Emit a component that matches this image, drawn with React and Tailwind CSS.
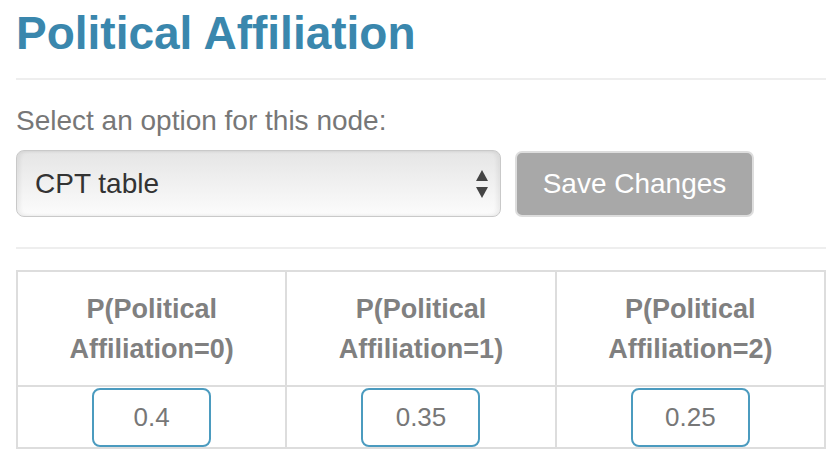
export default function App() {
  const cols = ["0", "1", "2"];
  const vals = ["0.4", "0.35", "0.25"];
  return (
    <div className="bg-white min-h-screen pl-4 pr-[10px]" style={{ fontFamily: '"Liberation Sans", Arial, sans-serif' }}>
      <div className="w-[810px]">
        <h1 className="pt-[10px] text-[46px] leading-[46px] font-bold text-[#3a87ad]">Political Affiliation</h1>
        <div className="mt-[22px] h-[2px] bg-[#eeeeee]" />
        <div className="mt-[21px] text-[28px] leading-[40px] text-[#777777]">Select an option for this node:</div>
        <div className="mt-[9px] flex items-start gap-[14px]">
          <div className="relative w-[485px] h-[67px] rounded-[8px] border border-[#c9c9c9] bg-gradient-to-b from-[#e5e5e5] to-[#fcfcfc] shadow-[inset_3px_0_4px_rgba(0,0,0,0.06),inset_-3px_0_4px_rgba(0,0,0,0.06)] flex items-center pl-[18px]">
            <span className="text-[28px] leading-[32px] text-[#333333]">CPT table</span>
            <svg className="absolute left-[458px] top-[19px]" width="14" height="30" viewBox="0 0 14 30">
              <polygon points="7,0 13,11 1,11" fill="#444444" />
              <polygon points="1,17 13,17 7,28" fill="#444444" />
            </svg>
          </div>
          <div className="mt-[1px] w-[239px] h-[66px] rounded-[7px] border-2 border-[#dddddd] bg-[#a8a8a8] flex items-center justify-center text-[28px] text-white">
            Save Changes
          </div>
        </div>
        <div className="mt-[30px] h-[2px] bg-[#eeeeee]" />
        <table className="mt-[21px] w-[810px] border-collapse table-fixed">
          <thead>
            <tr>
              {cols.map((c) => (
                <th key={c} className="border-2 border-[#dddddd] pt-[17px] pb-[16px] px-[8px] text-[27px] leading-[40px] font-bold text-[#808080] text-center align-top">
                  P(Political Affiliation={c})
                </th>
              ))}
            </tr>
          </thead>
          <tbody>
            <tr>
              {vals.map((v) => (
                <td key={v} className="border-2 border-[#dddddd] h-[62px] p-0 text-center align-middle">
                  <div className="mx-auto w-[119px] h-[59px] rounded-[8px] border-2 border-[#4b9bbf] flex items-center justify-center text-[26px] text-[#777777]">
                    {v}
                  </div>
                </td>
              ))}
            </tr>
          </tbody>
        </table>
      </div>
    </div>
  );
}
